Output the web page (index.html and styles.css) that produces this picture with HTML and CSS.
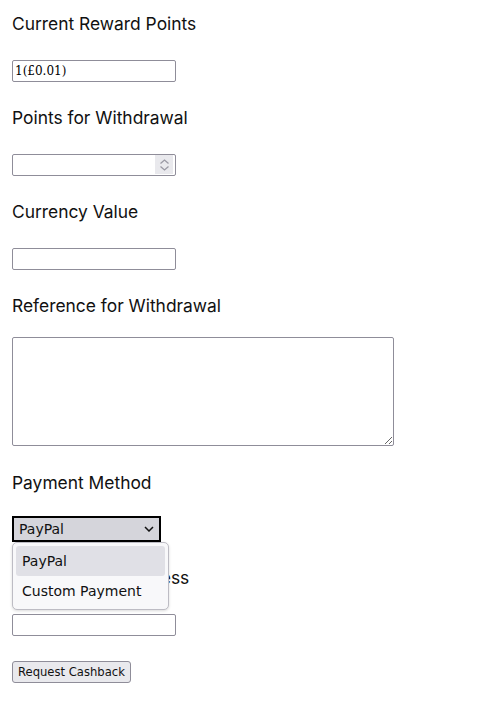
FILE: index.html
```html
<!DOCTYPE html>
<html>
<head>
<meta charset="utf-8">
<link rel="stylesheet" href="styles.css">
</head>
<body>
<form class="form">
  <div class="field">
    <label class="label" for="cur">Current Reward Points</label>
    <input class="text-input" id="cur" type="text" value="1(£0.01)" readonly>
  </div>
  <div class="field">
    <label class="label" for="pts">Points for Withdrawal</label>
    <div class="number-wrap">
      <input class="text-input" id="pts" type="text">
      <span class="spinner">
        <svg width="11" height="14" viewBox="0 0 11 14"><path d="M1.5 5.5 L5.5 2 L9.5 5.5" fill="none" stroke="#9a99a4" stroke-width="1.3"/><path d="M1.5 8.5 L5.5 12 L9.5 8.5" fill="none" stroke="#9a99a4" stroke-width="1.3"/></svg>
      </span>
    </div>
  </div>
  <div class="field">
    <label class="label" for="val">Currency Value</label>
    <input class="text-input" id="val" type="text">
  </div>
  <div class="field field-area">
    <label class="label label-tight" for="ref">Reference for Withdrawal</label>
    <textarea class="area" id="ref"></textarea>
  </div>
  <div class="field">
    <label class="label label-select" for="pm">Payment Method</label>
    <div class="select-wrap">
      <div class="select" id="pm">
        <span>PayPal</span>
        <svg width="10" height="6" viewBox="0 0 10 6"><path d="M1 1 L5 5 L9 1" fill="none" stroke="#111" stroke-width="1.5"/></svg>
      </div>
      <div class="dropdown">
        <div class="option selected">PayPal</div>
        <div class="option">Custom Payment</div>
      </div>
    </div>
  </div>
  <div class="field">
    <label class="label" for="em">PayPal Email Address</label>
    <input class="text-input" id="em" type="text">
  </div>
  <button class="btn" type="button">Request Cashback</button>
</form>
</body>
</html>
```

FILE: styles.css
```css
html, body {
  margin: 0;
  padding: 0;
  background: #fff;
}
.form {
  display: flex;
  flex-direction: column;
  align-items: flex-start;
  padding: 13px 12px;
}
.field {
  display: flex;
  flex-direction: column;
  align-items: flex-start;
  margin-bottom: 25px;
}
.field-area { margin-bottom: 26px; }
.label {
  font-family: Inter, "Noto Sans", sans-serif;
  font-size: 17.4px;
  line-height: 20px;
  color: #111;
  padding-top: 1px;
  margin-bottom: 26px;
}
.label-tight { margin-bottom: 21px; }
.label-select { margin-bottom: 23px; }
.text-input {
  box-sizing: border-box;
  width: 164px;
  height: 22px;
  margin: 0;
  padding: 1px 2px;
  border: 1px solid #8f8d99;
  border-radius: 2px;
  font-family: "DejaVu Serif", serif;
  font-size: 12px;
  color: #000;
  background: #fff;
  outline: none;
}
.number-wrap {
  position: relative;
}
.spinner {
  position: absolute;
  right: 3px;
  top: 1px;
  width: 18px;
  height: 19px;
  background: #e9e9ed;
  display: flex;
  align-items: center;
  justify-content: center;
}
.area {
  box-sizing: border-box;
  width: 382px;
  height: 109px;
  margin: 0;
  border: 1px solid #8f8d99;
  border-radius: 2px;
  resize: both;
  display: block;
}
.select-wrap {
  position: relative;
}
.select {
  box-sizing: border-box;
  width: 149px;
  height: 26px;
  border: 1px solid #000;
  outline: 1px solid #000;
  outline-offset: -2px;
  background: #d5d5db;
  display: flex;
  align-items: center;
  justify-content: space-between;
  padding: 0 6px 0 6px;
  font-family: "DejaVu Sans", sans-serif;
  font-size: 14px;
  color: #111;
}
.dropdown {
  position: absolute;
  left: 0;
  top: 26px;
  box-sizing: border-box;
  width: 157px;
  padding: 3px 3px;
  background: #f8f8fa;
  border: 1px solid #bdbcc4;
  border-radius: 5px;
  box-shadow: 0 1px 3px rgba(0,0,0,0.15);
  font-family: "DejaVu Sans", sans-serif;
  font-size: 14px;
  color: #111;
  z-index: 2;
}
.option {
  height: 30px;
  line-height: 30px;
  padding: 0 6px;
  border-radius: 3px;
}
.option.selected {
  background: #e0e0e6;
}
.btn {
  box-sizing: border-box;
  height: 22px;
  margin: 0;
  padding: 0 5px;
  border: 1px solid #8f8d99;
  border-radius: 3px;
  background: #e9e9ed;
  font-family: "DejaVu Sans", sans-serif;
  font-size: 11.6px;
  color: #111;
}
```
